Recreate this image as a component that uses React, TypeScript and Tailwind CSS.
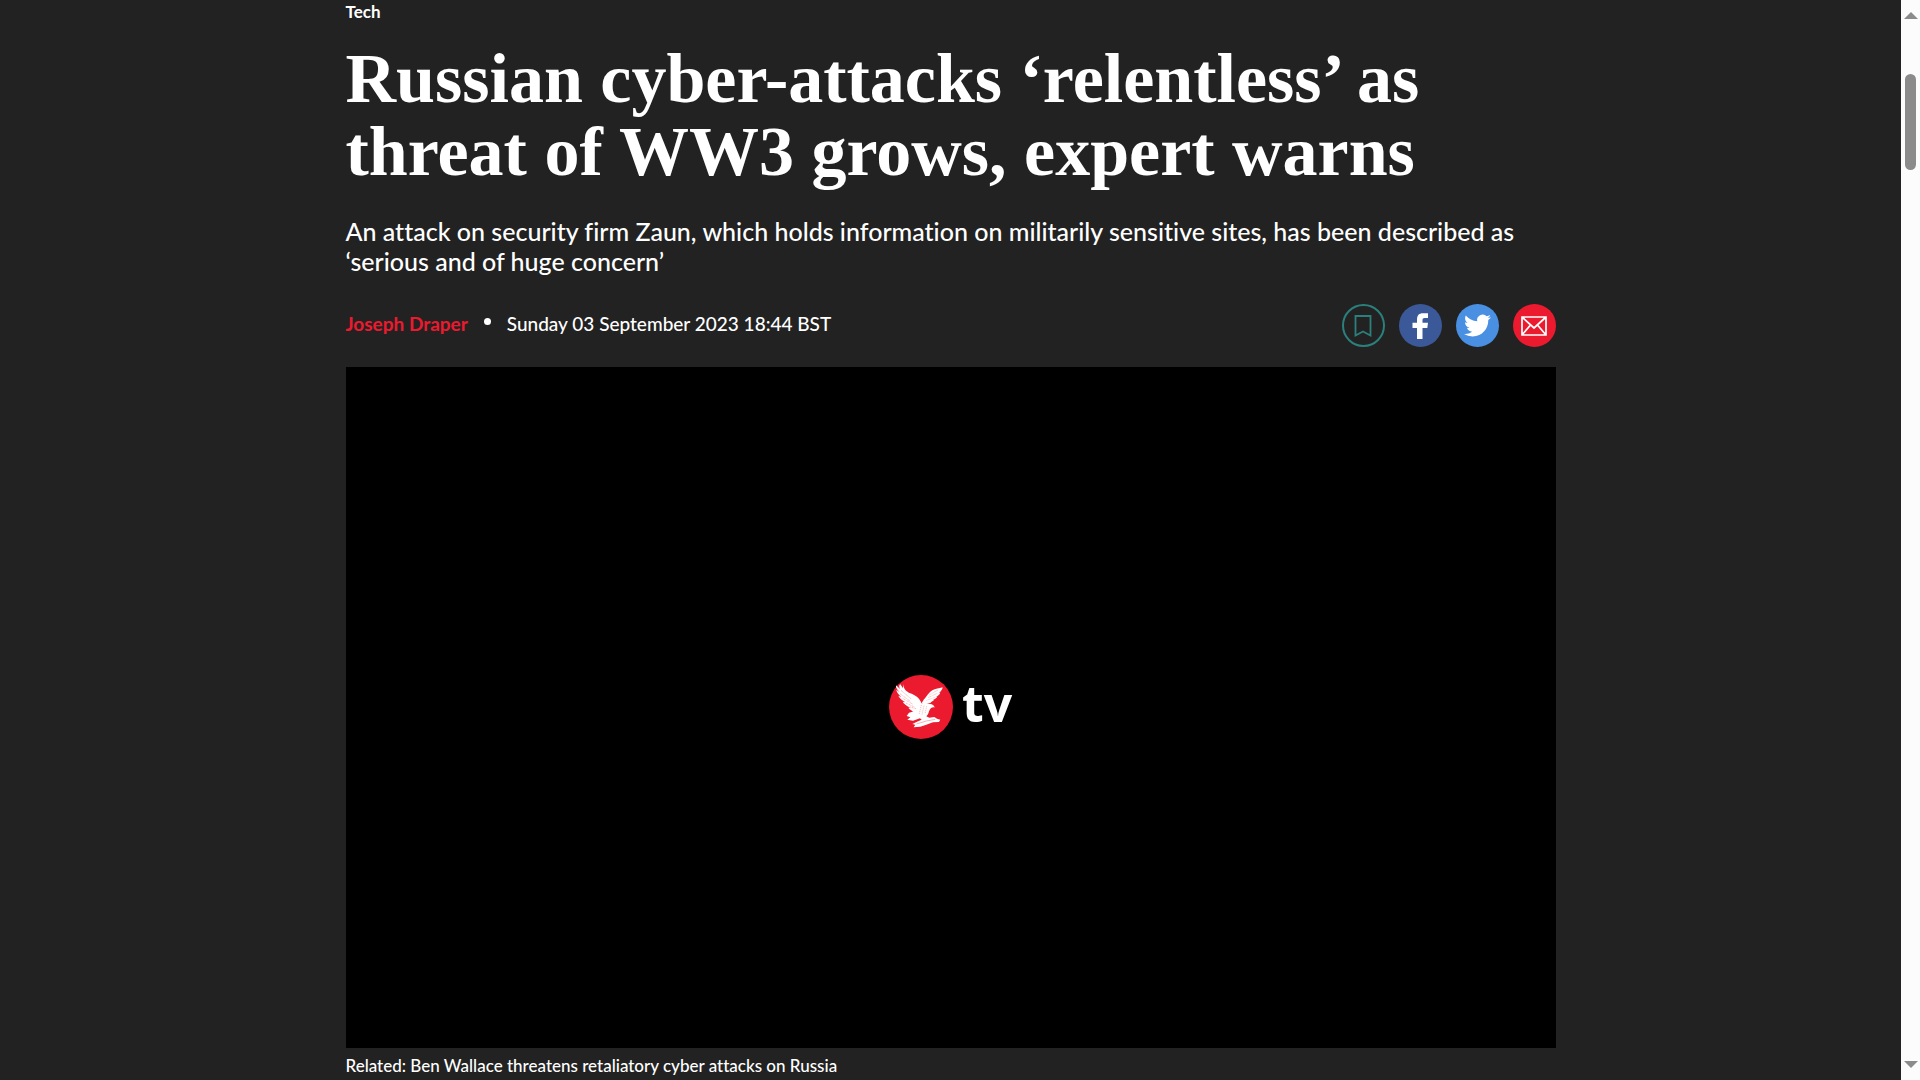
import React from 'react';

const EagleLogo: React.FC = () => (
  <svg viewBox="0 0 192 192" className="w-16 h-16" aria-hidden="true">
    <circle cx="96" cy="96" r="96" fill="#ec1a2e" />
    {/* left wing */}
    <path
      fill="#fff"
      d="M42 27 C44 42 52 50 64 55 C80 61 92 70 97 84 L104 92 L98 108 L76 112 C70 108 63 104 58 98 L64 98 C54 93 45 87 41 80 L49 82 C39 76 31 69 28 62 L37 66 C29 59 23 52 22 44 L32 52 C24 44 20 38 21 31 L33 42 C29 35 30 31 34 28 L42 40 Z"
    />
    {/* right wing */}
    <path
      fill="#fff"
      d="M161 37 C150 41 139 41 130 46 C118 53 114 65 105 73 L98 84 L108 88 L124 84 C128 80 132 78 135 75 L132 75 C138 72 142 69 145 65 L141 66 C148 62 152 58 154 53 L150 54 C156 49 160 44 161 37 Z"
    />
    {/* body, head and tail */}
    <path
      fill="#fff"
      d="M60 113 L78 108 C84 96 92 86 104 84 C111 83 116 86 121 87 C129 86 135 90 137 98 C131 95 127 98 123 103 C118 111 119 119 112 124 L121 128 L136 126 L144 131 L154 134 L150 141 L132 142 L112 149 L94 155 L74 157 L79 149 L70 147 L84 140 L98 134 L93 130 L72 137 L55 134 L64 127 L53 123 Z"
    />
    <g stroke="#ec1a2e" fill="none" strokeWidth="2" opacity="0.5">
      <path d="M36 46 L67 72 M33 56 L65 80 M41 70 L72 88 M51 84 L76 96 M64 96 L83 102" strokeDasharray="3 2" />
      <path d="M121 60 L149 44 M117 68 L145 55 M113 76 L137 67" strokeDasharray="2 2" />
      <path d="M97 90 L91 116 M105 92 L99 119 M113 94 L108 117" strokeDasharray="3 3" />
      <path d="M82 147 L112 138 L139 133" />
    </g>
  </svg>
);

const shareButton =
  'w-[43px] h-[43px] rounded-full flex items-center justify-center cursor-pointer';

const App: React.FC = () => {
  return (
    <div className="min-h-screen flex bg-[#222222] text-white font-['Lato',sans-serif] [font-variant-ligatures:none]">
      <main className="flex-1 min-w-0">
        <article className="max-w-[1210px] mx-auto">
          <a href="#tech" className="block text-[17px] leading-6 font-bold">
            Tech
          </a>
          <h1 className="mt-[18px] text-[70px] leading-[73px] font-bold font-['Liberation_Serif',serif]">
            Russian cyber-attacks ‘relentless’ as threat of WW3 grows, expert warns
          </h1>
          <h2 className="mt-[28px] text-[25px] leading-[30px] font-medium">
            An attack on security firm Zaun, which holds information on militarily sensitive sites, has been described as ‘serious and of huge concern’
          </h2>

          <div className="mt-7 flex items-center justify-between">
            <div className="flex items-center gap-4 pb-1 text-[19px] leading-6">
              <a href="#author" className="font-bold text-[#ec1a2e]">
                Joseph Draper
              </a>
              <span className="w-[7px] h-[7px] mb-1 rounded-full bg-white" />
              <time dateTime="2023-09-03T18:44" className="font-medium">
                Sunday 03 September 2023 18:44 BST
              </time>
            </div>

            <div className="flex gap-[14px]">
              <button aria-label="Bookmark" className={`${shareButton} border-2 border-[#2b7f7c]`}>
                <svg viewBox="0 0 18 22" className="w-[18px] h-[22px]" fill="none" stroke="#2b7f7c" strokeWidth="1.8">
                  <path d="M1.5 1H16.5V20.5L9 16.5L1.5 20.5Z" />
                </svg>
              </button>
              <button aria-label="Share on Facebook" className={`${shareButton} bg-[#3b5998]`}>
                <svg viewBox="0 0 16 26" className="w-4 h-[26px]" fill="#fff">
                  <path d="M5 26V15H0.500V9.800H5V6.500C5 2.300 7 0.300 11 0.300H16V5H12.800C11 5 10.500 5.800 10.500 7.300V9.800H16L15.300 15H10.500V26Z" />
                </svg>
              </button>
              <button aria-label="Share on Twitter" className={`${shareButton} bg-[#4a90e2]`}>
                <svg viewBox="0 0 24 24" className="w-[27px] h-[27px]" fill="#fff">
                  <path d="M23.953 4.570a10 10 0 01-2.825.775 4.958 4.958 0 002.163-2.723c-.951.555-2.005.959-3.127 1.184a4.920 4.920 0 00-8.384 4.482C7.690 8.095 4.067 6.130 1.640 3.162a4.822 4.822 0 00-.666 2.475c0 1.710.870 3.213 2.188 4.096a4.904 4.904 0 01-2.228-.616v.060a4.923 4.923 0 003.946 4.827 4.996 4.996 0 01-2.212.085 4.936 4.936 0 004.604 3.417 9.867 9.867 0 01-6.102 2.105c-.390 0-.779-.023-1.170-.067a13.995 13.995 0 007.557 2.209c9.053 0 13.998-7.496 13.998-13.985 0-.210 0-.420-.015-.630A9.935 9.935 0 0024 4.590z" />
                </svg>
              </button>
              <button aria-label="Share by email" className={`${shareButton} bg-[#ec1a2e]`}>
                <svg viewBox="0 0 26 20" className="w-[26px] h-5" fill="none" stroke="#fff" strokeWidth="1.7">
                  <path d="M1 1H25V19H1Z M1 1L13 12L25 1 M1 19L9.500 9 M25 19L16.500 9" />
                </svg>
              </button>
            </div>
          </div>

          <figure className="mt-5">
            <div className="aspect-video bg-black flex items-center justify-center gap-[9px]">
              <EagleLogo />
              <span className="pb-2 text-[50px] leading-[56px] font-bold font-['Open_Sans',sans-serif]">tv</span>
            </div>
            <figcaption className="mt-1.5 text-[17px] leading-6 font-medium">
              Related: Ben Wallace threatens retaliatory cyber attacks on Russia
            </figcaption>
          </figure>
        </article>
      </main>

      {/* Scrollbar */}
      <aside aria-hidden="true" className="w-[19px] shrink-0 bg-[#fcfcfc] flex flex-col items-center py-3">
        <svg viewBox="0 0 14 7" className="w-[14px] h-[7px]" fill="#8b8b8b">
          <path d="M0 7L7 0L14 7Z" />
        </svg>
        <div className="mt-[55px] w-[11px] h-24 rounded-full bg-[#8b8b8b]" />
        <svg viewBox="0 0 14 7" className="mt-auto w-[14px] h-[7px]" fill="#8b8b8b">
          <path d="M0 0L7 7L14 0Z" />
        </svg>
      </aside>
    </div>
  );
};

export default App;
